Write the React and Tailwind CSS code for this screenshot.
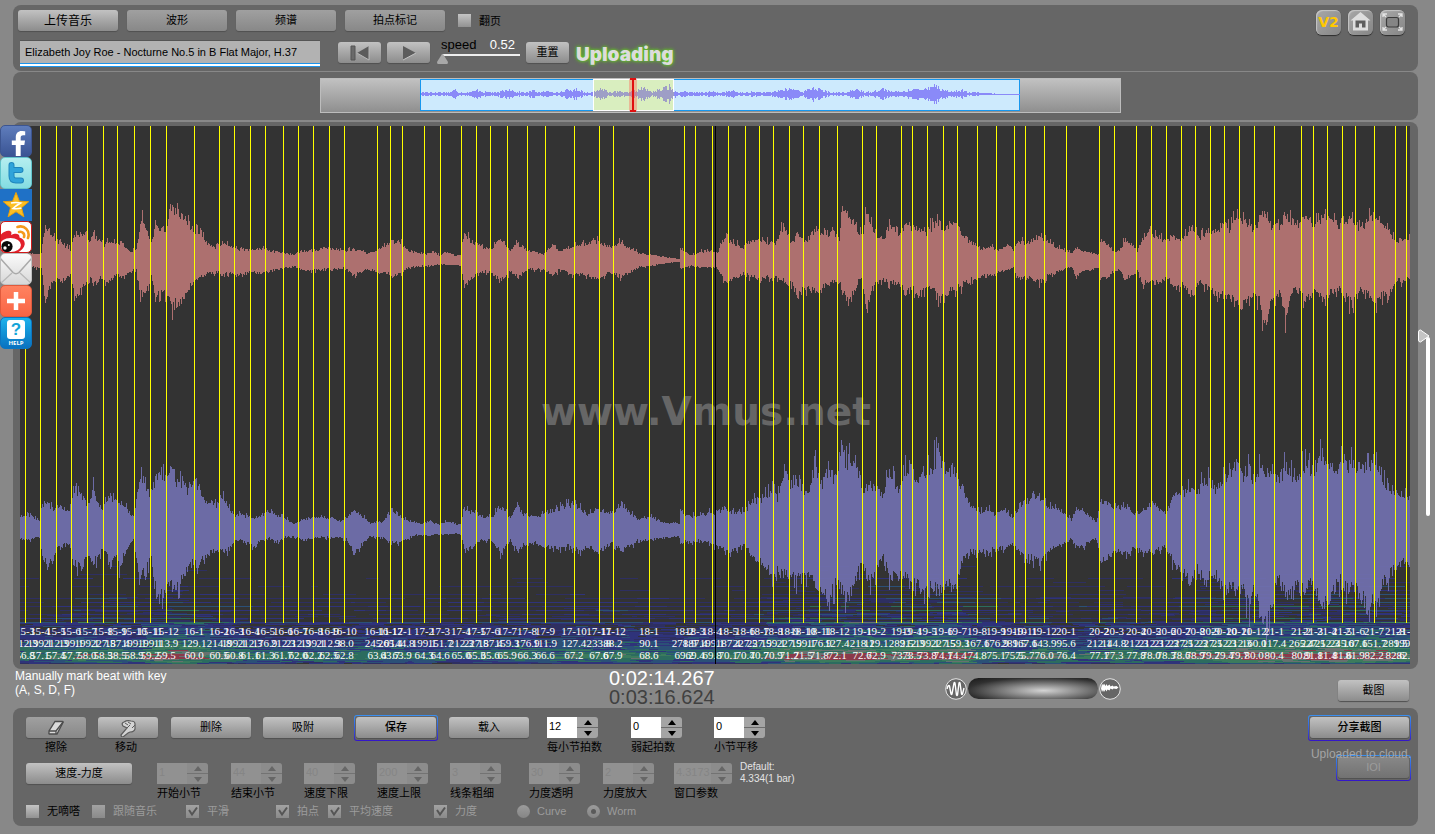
import React from "react";
import { FaFacebookF } from "react-icons/fa";

/* ---------- waveform data: [x, height above axis, depth below axis] ---------- */

const RED = [
  [20,7,8],[41,7,8],[45,40,45],[50,28,28],[56,20,20],[60,20,24],[70,11,16],[74,28,40],[84,29,28],[90,20,20],[93,28,25],[103,15,18],[107,22,25],[115,18,16],[121,18,18],[130,9,12],[136,11,10],[140,38,35],[143,42,38],[148,26,30],[151,18,15],[155,35,38],[164,35,33],[167,32,35],[170,60,49],[178,50,46],[185,48,38],[190,37,28],[194,32,22],[200,32,19],[207,17,14],[215,13,14],[221,18,14],[230,14,14],[240,11,16],[250,11,12],[260,12,14],[270,10,12],[280,8,9],[295,6,7],[300,9,10],[318,11,11],[325,13,9],[335,12,10],[345,9,8],[352,12,17],[360,10,13],[368,7,10],[378,11,14],[386,16,13],[392,20,18],[400,18,14],[408,10,8],[425,6,6],[432,9,6],[440,5,5],[447,9,5],[455,5,5],[460,5,6],[462,18,15],[464,31,30],[470,20,20],[480,15,13],[490,10,12],[499,22,22],[503,20,20],[510,10,12],[517,18,18],[528,10,10],[543,6,10],[552,16,16],[560,10,10],[572,14,16],[580,16,15],[598,20,20],[610,13,13],[620,18,18],[630,12,13],[640,7,7],[650,6,7],[660,4,4],[679,1,2],[680,13,9],[690,5,6],[700,9,8],[714,10,8],
  [717,8,8],[724,24,22],[731,20,22],[743,13,14],[749,20,18],[761,20,20],[775,18,18],[783,36,22],[786,32,24],[791,17,25],[797,28,38],[807,20,30],[816,35,35],[825,25,28],[832,33,22],[839,22,22],[842,58,35],[848,46,47],[857,32,25],[862,24,20],[866,50,55],[871,38,34],[876,28,25],[883,22,22],[889,38,25],[899,27,25],[906,40,38],[912,35,28],[919,32,38],[926,30,30],[931,35,30],[939,40,40],[945,30,40],[949,38,32],[958,36,30],[963,25,26],[970,20,22],[979,12,18],[990,14,15],[1000,10,12],[1007,16,12],[1013,10,8],[1017,20,20],[1027,18,18],[1039,26,24],[1048,19,17],[1057,13,13],[1066,9,8],[1072,8,8],[1075,14,17],[1082,10,12],[1091,8,10],[1099,6,8],[1100,22,22],[1105,20,20],[1114,8,12],[1119,10,10],[1124,20,20],[1131,18,16],[1137,10,12],[1142,22,24],[1149,30,25],[1158,25,24],[1165,20,18],[1174,24,28],[1183,22,27],[1192,38,38],[1199,24,24],[1209,32,30],[1215,27,36],[1225,42,40],[1229,33,40],[1237,50,45],[1243,42,50],[1250,36,40],[1254,32,40],[1259,45,45],[1265,50,72],[1271,36,45],[1275,36,45],[1280,35,32],[1285,50,65],[1291,44,35],[1298,38,33],[1304,46,43],[1312,38,38],[1316,40,32],[1325,50,45],[1330,42,32],[1339,38,30],[1344,42,36],[1352,46,50],[1358,36,32],[1367,40,35],[1375,50,45],[1381,38,38],[1388,36,38],[1395,20,22],[1404,24,22],[1410,25,20],
];

const BLUE = [
  [20,14,11],[28,16,11],[39,10,9],[42,25,28],[47,30,40],[53,20,33],[57,25,18],[69,20,17],[73,36,38],[78,42,38],[82,36,40],[87,22,25],[93,43,35],[97,27,32],[103,23,20],[109,36,33],[115,30,30],[119,28,40],[125,25,25],[133,13,10],[136,30,30],[139,52,52],[143,58,43],[148,40,38],[150,33,18],[155,55,60],[160,55,75],[164,52,65],[171,65,60],[177,50,62],[184,48,50],[189,38,40],[194,52,35],[197,48,45],[202,32,32],[211,28,25],[217,25,23],[221,36,25],[230,20,20],[234,15,14],[241,15,12],[253,12,18],[257,12,14],[269,20,10],[275,15,14],[285,11,9],[294,6,9],[303,10,12],[321,13,8],[331,12,10],[340,8,9],[347,14,12],[354,20,25],[363,13,15],[370,6,8],[379,8,10],[383,8,8],[388,17,14],[397,17,15],[404,10,12],[413,7,7],[425,6,6],[429,9,7],[438,5,5],[448,8,6],[455,5,5],[461,6,6],[464,22,24],[473,17,20],[480,14,12],[491,12,12],[500,24,25],[510,12,12],[517,25,25],[523,16,17],[535,12,15],[546,18,20],[556,22,20],[569,26,18],[579,24,24],[588,14,18],[597,24,26],[606,17,18],[613,18,15],[621,28,23],[629,18,18],[638,10,12],[650,13,12],[661,7,10],[679,6,8],[680,20,14],[689,12,14],[698,16,12],[712,17,16],
  [717,18,20],[724,22,22],[733,18,24],[745,18,16],[751,30,30],[761,32,36],[772,42,48],[777,34,45],[784,66,48],[788,48,52],[798,52,55],[807,36,50],[814,66,58],[822,50,62],[829,68,75],[835,50,60],[841,95,65],[846,70,80],[853,78,60],[860,55,38],[863,40,40],[869,48,56],[876,40,45],[883,38,30],[889,60,50],[899,42,50],[903,58,50],[910,68,60],[917,55,62],[924,55,72],[931,64,62],[938,82,65],[945,62,62],[951,66,62],[958,52,50],[963,42,32],[970,25,25],[979,18,24],[988,20,24],[995,16,20],[1004,20,20],[1013,12,15],[1019,26,26],[1027,30,30],[1034,38,32],[1041,33,38],[1048,22,22],[1055,24,20],[1064,17,16],[1071,10,10],[1075,20,20],[1082,20,18],[1089,14,14],[1096,7,10],[1100,30,35],[1108,28,30],[1114,22,22],[1126,25,26],[1135,16,20],[1144,22,24],[1153,28,25],[1165,16,18],[1174,36,38],[1183,38,46],[1190,45,56],[1197,40,42],[1205,54,50],[1215,42,50],[1225,54,66],[1236,68,66],[1243,58,64],[1248,66,82],[1254,52,66],[1261,72,90],[1266,62,110],[1273,58,75],[1277,54,52],[1287,66,76],[1296,52,60],[1305,70,70],[1312,60,55],[1322,78,85],[1328,70,78],[1335,60,52],[1344,72,60],[1356,65,66],[1363,68,75],[1367,75,85],[1375,65,75],[1381,50,60],[1388,48,52],[1395,38,40],[1404,38,34],[1410,34,34],
];

/* overview: [x, amplitude] */
const MINI = [
  [0,2],[6,3],[12,2],[30,3],[34,6],[38,2],[50,3],[58,6],[62,3],[75,2],[88,7],[94,3],[105,2],[112,5],[118,2],[128,4],[136,2],[145,5],[157,6],[164,2],[174,3],[180,8],[187,3],[200,3],[207,2],[214,4],[222,8],[230,3],[240,6],[247,11],[252,5],[258,2],[263,4],[272,2],[290,3],[300,2],[312,4],[318,2],[335,3],[345,2],[360,5],[372,7],[382,3],[392,9],[400,5],[410,2],[425,2],[436,7],[444,2],[455,5],[462,7],[470,3],[480,3],[492,7],[500,5],[512,13],[520,7],[528,3],[540,5],[548,2],[556,2],[568,1],[580,0],[599,0],
];

const X0 = 20;
const W = 1390;
const H = 538;

function rng(seed) {
  let s = seed;
  return () => {
    s = (s * 1664525 + 1013904223) % 4294967296;
    return s / 4294967296;
  };
}

function sample(env, x, k) {
  for (let i = 1; i < env.length; i++) {
    if (x <= env[i][0]) {
      const a = env[i - 1];
      const b = env[i];
      return a[k] + ((b[k] - a[k]) * (x - a[0])) / (b[0] - a[0]);
    }
  }
  return env[env.length - 1][k];
}

function bars(env, axis, seed) {
  const r = rng(seed);
  let d = "";
  for (let i = 0; i < W; i++) {
    const x = i + X0;
    const n = () => 0.8 + 0.24 * r() + (r() > 0.86 ? 0.2 : 0);
    const up = Math.max(1, sample(env, x, 1) * n());
    const dn = Math.max(1, sample(env, x, 2) * n());
    d += `M${i + 0.5} ${(axis - up).toFixed(1)}V${(axis + dn).toFixed(1)}`;
  }
  return d;
}

function miniBars(from, to) {
  const r = rng(17);
  let d = "";
  for (let i = 0; i < 599; i++) {
    const a = Math.max(0.5, sample(MINI, i, 1) * (0.4 + 0.6 * r()));
    if (i >= from && i < to) d += `M${i + 101.5} ${(16 - a).toFixed(1)}V${(16 + a).toFixed(1)}`;
  }
  return d;
}

const RED_PATH = bars(RED, 134, 5);
const BLUE_PATH = bars(BLUE, 403, 11);

/* ---------- spectrogram ---------- */

const LEVELS = [
  [0.36, "#2e2f74"],
  [0.5, "#2f3596"],
  [0.68, "#2b5888"],
  [0.86, "#2c7a6a"],
  [1.06, "#3f8c68"],
  [1.26, "#74807e"],
  [1.46, "#a03c52"],
];
const FALLOFF = [[440,0],[452,0.06],[470,0.2],[485,0.32],[494,0.44],[498,0.52],[508,0.56],[514,0.72],[520,0.84],[525,1.0],[528,1.22],[532,1.22],[535,0.95],[536,0.7],[538,0.5]];

function spectrogram() {
  const r = rng(29);
  const out = LEVELS.map(() => "");
  for (let y = 440; y < H; y++) {
    const upper = y < 498;
    const row = (y % 4 === 0 ? 0.3 : 0) + r() * 0.2 - 0.16;
    let x = 0;
    while (x < W) {
      const len = 4 + Math.floor(r() * (upper ? 34 : 22));
      const loud = 0.68 + Math.min(0.6, sample(BLUE, x + X0, 1) / 100);
      const v = sample(FALLOFF, y, 1) * loud + (row * (upper ? 1.1 : 0.5) + (r() - 0.5) * 0.36) * (upper ? loud : 1);
      let k = -1;
      LEVELS.forEach((l, i) => {
        if (v >= l[0]) k = i;
      });
      if (k >= 0) out[k] += `M${x} ${y + 0.5}H${Math.min(W, x + len)}`;
      x += len;
    }
  }
  return out;
}
const SPECTRUM = spectrogram();

/* ---------- beats ---------- */

const BEAT_X = [25,40,56,71,87,103,117,134,150,166,194,219,234,250,265,283,298,313,329,344,377,390,402,424,440,461,476,490,507,527,545,574,599,613,649,684,695,712,728,745,759,773,789,803,819,837,862,876,901,912,927,943,957,977,996,1014,1025,1044,1066,1099,1114,1136,1151,1166,1181,1195,1210,1224,1239,1254,1274,1301,1313,1327,1342,1355,1374,1395,1406];
const TEMPO = {
  "15-12": "113.9", "16-1": "129.1", "16-2": "214.8", "16-10": "98.0", "17-9": "111.9", "17-10": "127.4",
  "17-11": "233.8", "17-12": "88.2", "18-1": "90.1", "18-2": "278.9", "18-12": "127.4", "19-1": "218.1",
  "19-2": "129.1", "19-12": "143.9", "20-1": "95.6", "20-2": "212.1", "20-3": "144.8", "20-12": "160.0", "21-1": "117.4",
};
const BEATS = BEAT_X.map((x, i) => {
  const n = i + 2;
  const name = `${15 + Math.floor(n / 12)}-${(n % 12) + 1}`;
  const gap = (BEAT_X[i + 1] || x + 16) - x;
  return {
    x: x - X0,
    name,
    tempo: TEMPO[name] || (3185 / gap).toFixed(1),
    time: (60 + (x - 194) * 0.01885).toFixed(1),
  };
});

/* ---------- controls ---------- */

const BRIGHT = "bg-linear-to-b from-[#c2c2c2] to-[#8c8c8c] text-black";
const DIM = "bg-linear-to-b from-[#a0a0a0] to-[#888888] text-black";
const OFF = "bg-linear-to-b from-[#888888] to-[#727272] text-[#9c9c9c]";

function Button({ className = "", look = BRIGHT, children, ...rest }) {
  return (
    <button
      type="button"
      className={`flex h-[21px] items-center justify-center rounded-[3px] text-[11px] leading-none shadow-[0_1px_1px_#505050] ${look} ${className}`}
      {...rest}
    >
      {children}
    </button>
  );
}

function Ring({ className = "", children }) {
  return (
    <div className={`rounded-[3px] bg-linear-to-b from-[#3a90f0] to-[#3412c8] p-px ${className}`}>
      <div className="rounded-[2px] bg-[#666] p-px pb-0.5">{children}</div>
    </div>
  );
}

function Arrow({ down = false, off = false }) {
  return (
    <svg viewBox="0 0 8 5" className="h-[5px] w-2" aria-hidden="true">
      <path d={down ? "M0 0h8L4 5z" : "M0 5h8L4 0z"} fill={off ? "#666" : "#000"} />
    </svg>
  );
}

function Stepper({ id, label, value, off = false, wide = false, className = "" }) {
  const half = `flex flex-1 items-center justify-center ${off ? "bg-[#8c8c8c]" : "bg-[#a4a4a4]"}`;
  return (
    <div className={`shrink-0 ${className}`}>
      <div className="flex h-[21px]">
        <input
          id={id}
          type="text"
          defaultValue={value}
          disabled={off}
          className={`h-[21px] pb-1 pl-0.5 text-[11px] ${wide ? "w-[37px]" : "w-[30px]"} ${off ? "bg-[#919191] text-[#858585]" : "bg-white text-black"}`}
        />
        <div className={`flex w-[21px] flex-col gap-px overflow-hidden rounded-r-[3px] ${off ? "bg-[#737373]" : "bg-[#6c6c6c]"}`}>
          <button type="button" disabled={off} aria-label={`${label} +`} className={half}>
            <Arrow off={off} />
          </button>
          <button type="button" disabled={off} aria-label={`${label} -`} className={half}>
            <Arrow down off={off} />
          </button>
        </div>
      </div>
      <label htmlFor={id} className="mt-0.5 block text-[11px] leading-[14px] whitespace-nowrap text-black">
        {label}
      </label>
    </div>
  );
}

function Check({ id, label, checked = false, off = false, className = "" }) {
  return (
    <div className={`flex shrink-0 items-center gap-2 ${className}`}>
      <span className="relative flex size-[13px]">
        <input
          id={id}
          type="checkbox"
          defaultChecked={checked}
          disabled={off}
          className={`size-[13px] appearance-none ${off ? "bg-linear-to-b from-[#a2a2a2] to-[#8a8a8a]" : "bg-linear-to-b from-[#c4c4c4] to-[#929292]"}`}
        />
        {checked && (
          <svg viewBox="0 0 13 13" className="pointer-events-none absolute inset-0" aria-hidden="true">
            <path d="M3 5l3 4.5L11 2.5" fill="none" stroke="#555" strokeWidth="2" />
          </svg>
        )}
      </span>
      <label htmlFor={id} className={`text-[11px] leading-4 whitespace-nowrap ${off ? "text-[#9c9c9c]" : "text-black"}`}>
        {label}
      </label>
    </div>
  );
}

function Radio({ id, label, checked = false, className = "" }) {
  return (
    <div className={`flex shrink-0 items-center gap-[7px] ${className}`}>
      <span className="relative flex size-[13px]">
        <input
          id={id}
          type="radio"
          name="plot"
          defaultChecked={checked}
          disabled
          className="size-[13px] appearance-none rounded-full bg-linear-to-b from-[#9c9c9c] to-[#858585]"
        />
        {checked && <span className="pointer-events-none absolute inset-1 rounded-full bg-[#5a5a5a]" />}
      </span>
      <label htmlFor={id} className="text-[11px] leading-4 text-[#9c9c9c]">{label}</label>
    </div>
  );
}

/* ---------- share links ---------- */

function Share({ label, className, children }) {
  return (
    <a href="#share" aria-label={label} className={`flex size-8 shrink-0 overflow-hidden ${className}`}>
      {children}
    </a>
  );
}

function ShareBar() {
  return (
    <nav className="absolute top-[3px] left-0 flex w-8 flex-col">
      <Share label="Facebook" className="items-end justify-end rounded-[5px] border border-[#3c5590] bg-linear-to-b from-[#5f7dbc] to-[#3a5494]">
        <FaFacebookF className="size-[25px] text-white" />
      </Share>
      <Share label="Twitter" className="items-center justify-center rounded-[5px] border border-[#62c5cc] bg-linear-to-b from-[#b4eef0] to-[#84dde2]">
        <svg viewBox="0 0 32 32" className="size-8 shrink-0" aria-hidden="true">
          <path d="M11.500 8v11q0 4.500 4.500 4.500H21M11.500 13h9" fill="none" stroke="#1f86bd" strokeWidth="6" strokeLinecap="round" strokeLinejoin="round" />
          <path d="M11.500 8v11q0 4.500 4.500 4.500H21M11.500 13h9" fill="none" stroke="#2fa3da" strokeWidth="4" strokeLinecap="round" strokeLinejoin="round" />
        </svg>
      </Share>
      <Share label="Qzone" className="bg-[#1f71c6]">
        <svg viewBox="0 0 32 32" className="size-8" aria-hidden="true">
          <path d="M16 3.500l3.400 8.700 9.300.500-7.200 6 2.400 9.100L16 22.700l-7.900 5.100 2.400-9.100-7.200-6 9.300-.500z" fill="#fbbf24" stroke="#e9a00c" strokeWidth="1" />
          <path d="M11 14c4-.8 7-.6 9.500 0-3 1.800-6 4-7.500 5.500 3 .5 6 .2 8.500-.5" fill="none" stroke="#fff" strokeWidth="1.700" />
        </svg>
      </Share>
      <Share label="Weibo" className="items-center justify-center rounded-[5px] border border-[#d01818] bg-white">
        <svg viewBox="0 0 32 32" className="size-8 shrink-0" aria-hidden="true">
          <path d="M0 15c3-5 8-6 10-5 2 .800 1.500 2.500 1 4 4-2 9-2 8.500 2.500 4 1.200 5.500 4 5.200 7-.7 4-4.700 7.500-8.700 8.500H0z" fill="#e2202c" />
          <ellipse cx="10.500" cy="24" rx="10.500" ry="7" fill="#fff" />
          <circle cx="7" cy="25.500" r="5.600" fill="#0a0a0a" />
          <circle cx="5" cy="27" r="1.700" fill="#fff" />
          <circle cx="8.800" cy="24" r="1" fill="#fff" />
          <path d="M17.500 6c7-2.500 13 4 10.500 11M19 11c3.500-1 6 2 5 5" fill="none" stroke="#f49a1c" strokeWidth="2.600" strokeLinecap="round" />
        </svg>
      </Share>
      <Share label="Email" className="items-center justify-center rounded-[5px] border border-[#c0c0c0] bg-linear-to-b from-[#fafafa] to-[#d8d8d8]">
        <svg viewBox="0 0 32 32" className="size-8 shrink-0" aria-hidden="true">
          <path d="M0 31l12-11M32 31L20 20" fill="none" stroke="#b8b8b8" strokeWidth="1.300" />
          <path d="M0 5l13 14.500q3 2.500 6 0L32 5" fill="none" stroke="#aaa" strokeWidth="1.600" />
        </svg>
      </Share>
      <Share label="More" className="items-center justify-center rounded-[5px] border border-[#e05a3c] bg-linear-to-b from-[#ff8260] to-[#f96444]">
        <svg viewBox="0 0 32 32" className="size-8 shrink-0" aria-hidden="true">
          <path d="M16 7v18M7 16h18" stroke="#fff" strokeWidth="4.500" />
        </svg>
      </Share>
      <Share label="Help" className="items-center justify-center rounded-[5px] border border-[#0c76c0] bg-linear-to-b from-[#1db2ec] to-[#0a72c0]">
        <span className="flex flex-col items-center">
          <span className="flex h-[19px] w-[18px] items-center justify-center rounded-[3px] bg-white text-[17px] leading-none font-bold text-[#14a4d8]">?</span>
          <span className="font-['Open_Sans',sans-serif] text-[6px] leading-[8px] font-bold text-white">HELP</span>
        </span>
      </Share>
    </nav>
  );
}

/* ---------- panels ---------- */

const TILE = "flex size-[25px] items-center justify-center rounded-[6px] bg-linear-to-br from-[#a8a8a8] to-[#868686] shadow-[0_1px_1px_#2c2c2c,inset_1px_1px_1px_#c6c6c6]";

function TopPanel() {
  return (
    <header className="mr-[17px] ml-[13px] flex h-[66px] justify-between rounded-lg bg-[#666]">
      <div className="pt-[5px] pl-[5px]">
        <div className="flex items-center gap-[9px]">
          <Button className="w-[100px]">
            <span className="text-[12px]">上传音乐</span>
          </Button>
          <Button look={DIM} className="w-[100px]">波形</Button>
          <Button look={DIM} className="w-[100px]">频谱</Button>
          <Button look={DIM} className="w-[100px]">拍点标记</Button>
          <Check id="flip" label="翻页" className="ml-1" />
        </div>
        <div className="mt-[9px] flex items-start pl-0.5">
          <input
            type="text"
            aria-label="Title"
            defaultValue="Elizabeth Joy Roe - Nocturne No.5 in B Flat Major, H.37"
            className="h-[27px] w-[300px] border-t border-t-[#555] bg-[#b2b2b2] pb-1 pl-[5px] text-[11px] text-black shadow-[inset_0_-1px_0_#1c94ec,inset_0_-3px_0_#fff,inset_0_-4px_0_#1c94ec]"
          />
          <Button className="mt-0.5 ml-[18px] w-[43px]" aria-label="Back to start">
            <svg viewBox="0 0 22 16" className="h-4 w-[22px]" aria-hidden="true">
              <path d="M2 1h4v14H2z" fill="#6a6a6a" stroke="#555" strokeWidth="1" />
              <path d="M20 1L8 8l12 7z" fill="#5c5c5c" />
              <path d="M20 1v14L8 8" fill="none" stroke="#b8b8b8" strokeWidth="1" />
            </svg>
          </Button>
          <Button className="mt-0.5 ml-1.5 w-[43px]" aria-label="Play">
            <svg viewBox="0 0 16 16" className="size-4" aria-hidden="true">
              <path d="M2 1l13 7-13 7z" fill="#5c5c5c" />
              <path d="M2 15l13-7" fill="none" stroke="#c4c4c4" strokeWidth="1" />
            </svg>
          </Button>
          <div className="relative ml-[7px] h-[27px] w-[84px] text-[13px] leading-4">
            <div className="-mt-[3px] flex justify-between pr-1.5 pl-1">
              <label htmlFor="speed" className="text-black">speed</label>
              <output className="text-white">0.52</output>
            </div>
            <svg viewBox="0 0 84 12" className="absolute top-[13px] left-0 h-3 w-[84px]" aria-hidden="true">
              <path d="M6 2h77" stroke="#eee" strokeWidth="2" />
              <path d="M5 1h1l5 8q0 2-1 2H1q-1 0-1-2z" fill="#a8a8a8" />
            </svg>
            <input id="speed" type="range" min="0" max="2" step="0.01" defaultValue="0.52" className="absolute inset-x-0 bottom-0 h-3 w-full opacity-0" />
          </div>
          <Button className="mt-0.5 ml-[5px] w-[43px]">重置</Button>
          <p className="mt-[5px] ml-[7px] font-[Inter,sans-serif] text-[19px] leading-5 font-black text-[#dcdcdc] [text-shadow:0_0_3px_#66d020,0_0_4px_#5cc41c]">Uploading</p>
        </div>
      </div>
      <nav className="flex gap-[7px] pt-[5px] pr-[13px]">
        <a href="#v2" className={`${TILE} font-['DejaVu_Sans',sans-serif] text-[14px] font-bold text-[#ffc800]`}>V2</a>
        <a href="#home" aria-label="Home" className={TILE}>
          <svg viewBox="0 0 25 25" className="size-[25px]" aria-hidden="true">
            <path d="M12.500 2L2.500 10.500h2.500V20.500h15v-10h2.500z" fill="#dedede" />
            <path d="M7.500 17.500v-7h10v7h-3.500v-4h-3v4z" fill="#5e5e5e" />
          </svg>
        </a>
        <a href="#full" aria-label="Full screen" className={TILE}>
          <svg viewBox="0 0 25 25" className="size-[25px]" aria-hidden="true">
            <rect x="6.500" y="7.500" width="12" height="9.500" rx="2" fill="#858585" stroke="#3c3c3c" strokeWidth="1.200" />
            <path d="M3 7V4h4M3 4l3 3M22 7V4h-4M22 4l-3 3M3 17v3h4M3 20l3-3M22 17v3h-4M22 20l-3-3" fill="none" stroke="#e4e4e4" strokeWidth="1.300" />
          </svg>
        </a>
      </nav>
    </header>
  );
}

function Overview() {
  return (
    <section className="mt-px mr-[17px] ml-[13px] flex h-12 justify-center rounded-lg bg-[#666] pt-1.5 pl-[10px]">
      <svg viewBox="0 0 801 35" className="h-[35px] w-[801px]" shapeRendering="crispEdges" aria-label="Overview">
        <defs>
          <linearGradient id="track" x1="0" y1="0" x2="0" y2="1">
            <stop offset="0" stopColor="#c2c2c2" />
            <stop offset="1" stopColor="#8e8e8e" />
          </linearGradient>
        </defs>
        <rect x=".5" y=".5" width="800" height="34" fill="url(#track)" stroke="#bdbdbd" />
        <rect x="100.500" y="1.500" width="599" height="31" fill="#cdeafd" stroke="#1797ee" />
        <path d={miniBars(0, 599)} stroke="#8a8af8" />
        <rect x="273.500" y="1.500" width="80" height="31" fill="#d9eebf" stroke="#fff" />
        <path d={miniBars(173, 253)} stroke="#9e9ec6" />
        <rect x="309" y="1" width="8" height="32" fill="#ff6a5a" opacity=".4" />
        <path d="M313 1v33M310 1h6M310 33h6" stroke="#e01010" strokeWidth="2" />
      </svg>
    </section>
  );
}

function WavePanel() {
  return (
    <section className="relative mt-0.5 flex">
      <div className="ml-[13px] flex-1 rounded-lg bg-[#666] px-[7px] pt-1 pr-2 pb-[5px]">
        <div className="relative h-[538px] overflow-hidden bg-[#333]">
          <svg viewBox={`0 0 ${W} ${H}`} preserveAspectRatio="none" className="absolute inset-0 size-full" shapeRendering="crispEdges" aria-hidden="true">
            <path d={RED_PATH} stroke="#ad706f" />
            <g opacity=".9">
              {SPECTRUM.map((d, i) => (
                <path key={i} d={d} stroke={LEVELS[i][1]} opacity={i < 2 ? 0.8 : 0.9} />
              ))}
            </g>
            <path d={BLUE_PATH} stroke="#7170ae" opacity=".93" />
          </svg>
          <p className="absolute inset-x-0 top-[262px] pr-[18px] text-center font-['DejaVu_Sans',sans-serif] text-[39px] leading-[48px] font-bold text-[#666]">www.Vmus.net</p>
          <svg className="absolute inset-0 size-full font-['Liberation_Serif',serif] text-[11px]" fill="#fff" textAnchor="middle" aria-label="Beats">
            {BEATS.map((b) => {
              const x = `${(b.x / W) * 100}%`;
              return (
                <g key={b.name}>
                  <rect x={x} y="0" width="1" height="497" fill="#ffff00" shapeRendering="crispEdges" />
                  <text x={x} y="509">{b.name}</text>
                  <text x={x} y="521">{b.tempo}</text>
                  <text x={x} y="533">{b.time}</text>
                </g>
              );
            })}
            <rect x="50%" y="0" width="1" height="538" fill="#000" />
          </svg>
        </div>
      </div>
      <div className="relative w-[17px] shrink-0">
        <svg viewBox="0 0 12 188" className="absolute top-[207px] left-0 h-[188px] w-3" aria-hidden="true">
          <path d="M10 10v175" stroke="#fff" strokeWidth="4" strokeLinecap="round" />
          <path d="M.500 3q0-2 2-2L11 7 2.500 13q-2 0-2-2z" fill="#c4c4c4" stroke="#fff" strokeWidth="1" />
        </svg>
        <input type="range" aria-label="Zoom" defaultValue="100" className="absolute top-[207px] left-0 h-[188px] w-4 opacity-0 [writing-mode:vertical-lr]" />
      </div>
      <ShareBar />
    </section>
  );
}

function StatusBar() {
  return (
    <section className="grid h-[39px] grid-cols-[594fr_336fr_393fr_97fr] pl-[15px]">
      <p className="text-[12px] leading-[14px] text-white">
        Manually mark beat with key
        <br />
        (A, S, D, F)
      </p>
      <div className="text-[20px] leading-[19px]">
        <p className="text-white">0:02:14.267</p>
        <p className="text-[#404040]">0:03:16.624</p>
      </div>
      <div className="flex items-center">
        <svg viewBox="0 0 22 22" className="size-[22px]" aria-hidden="true">
          <circle cx="11" cy="11" r="10.300" fill="#666" stroke="#e4e4e4" strokeWidth="1" />
          <path d="M2 11l1-3q1-1 1.500 0L6 16q.500 1 1 0L9 5q.500-1 1 0l1.500 12q.500 1 1 0L14 5q.500-1 1 0l1.500 11q.500 1 1 0l1.500-6" fill="none" stroke="#fff" strokeWidth="1.400" />
        </svg>
        <div className="relative mx-px h-[21px] w-[130px] rounded-full bg-[radial-gradient(ellipse_at_58%_60%,#d4d4d4,#303030_72%,#181818)]">
          <input type="range" aria-label="Balance" className="absolute inset-0 size-full opacity-0" />
        </div>
        <svg viewBox="0 0 22 22" className="size-[22px]" aria-hidden="true">
          <circle cx="11" cy="11" r="10.300" fill="#666" stroke="#e4e4e4" strokeWidth="1" />
          <path d="M2 10.500l1-5 1 2 1-2 1.500 2.500 1-2 1 2 2-1.500 1 2 2-1 1 1 3-.500 2 1.500-2 1.500-3-.500-1 1-2-1-1 2-2-1-1 2-1-2-1.500 2.500-1-2-1 2z" fill="#fff" />
        </svg>
      </div>
      <div className="pt-[11px]">
        <Button className="w-[71px]">截图</Button>
      </div>
    </section>
  );
}

function ToolPanel() {
  return (
    <footer className="mr-[17px] ml-[13px] flex justify-between rounded-lg bg-[#666] pt-[9px] pr-[7px] pb-[7px] pl-[13px]">
      <div>
        <div className="flex h-[46px] items-start">
          <div className="mr-3 w-[60px]">
            <Button id="erase" look={DIM} className="w-[60px]" aria-label="擦除">
              <svg viewBox="0 0 18 16" className="h-4 w-[18px]" aria-hidden="true">
                <path d="M8 1.500h7.500q1 0 .500 1L10 14H2.500q-1 0-.500-1v-2z" fill="#dadada" stroke="#4c4c4c" strokeWidth="1.300" />
                <path d="M2 11h7l7-9M9 11v3" fill="none" stroke="#4c4c4c" strokeWidth="1.300" />
              </svg>
            </Button>
            <label htmlFor="erase" className="mt-0.5 block text-center text-[11px] leading-[14px] text-black">擦除</label>
          </div>
          <div className="mr-[13px] w-[60px]">
            <Button id="move" className="w-[60px]" aria-label="移动">
              <svg viewBox="0 0 18 18" className="size-[18px]" aria-hidden="true">
                <path d="M2 16L8 9 4 7q-2-3 1-4 3-2 7-1 4 0 4 3v5q-1 3-5 3l-2 1-5 4q-2 0-2-2z" fill="#d4d4d4" stroke="#5c5c5c" strokeWidth="1.200" />
                <path d="M8 9l3-3M6 4l3 2M9 3l3 2M16 6l-3 3" fill="none" stroke="#5c5c5c" strokeWidth="1" />
              </svg>
            </Button>
            <label htmlFor="move" className="mt-0.5 block pr-1 text-center text-[11px] leading-[14px] text-black">移动</label>
          </div>
          <div className="flex">
            <Button className="w-20">删除</Button>
            <Button className="ml-3 w-20">吸附</Button>
            <Ring className="-mt-0.5 mr-[11px] ml-[11px]">
              <Button className="w-20 font-medium">保存</Button>
            </Ring>
            <Button className="w-20">载入</Button>
          </div>
          <Stepper id="beats" label="每小节拍数" value="12" className="ml-[18px] w-[84px]" />
          <Stepper id="pickup" label="弱起拍数" value="0" className="w-[83px]" />
          <Stepper id="shift" label="小节平移" value="0" />
        </div>
        <div className="flex h-10 items-start">
          <Button className="mr-[25px] w-[106px]">速度-力度</Button>
          <Stepper id="from" label="开始小节" value="1" off className="w-[74px]" />
          <Stepper id="to" label="结束小节" value="44" off className="w-[73px]" />
          <Stepper id="min" label="速度下限" value="40" off className="w-[73px]" />
          <Stepper id="max" label="速度上限" value="200" off className="w-[73px]" />
          <Stepper id="line" label="线条粗细" value="3" off className="w-[79px]" />
          <Stepper id="alpha" label="力度透明" value="30" off className="w-[74px]" />
          <Stepper id="gain" label="力度放大" value="2" off className="w-[71px]" />
          <Stepper id="window" label="窗口参数" value="4.3173" off wide className="w-[66px]" />
          <p className="-mt-0.5 text-[10px] leading-3 text-[#e4e4e4]">
            Default:
            <br />
            4.334(1 bar)
          </p>
        </div>
        <div className="flex h-4 items-center">
          <Check id="mute" label="无嘀嗒" className="w-[66px]" />
          <Check id="follow" label="跟随音乐" off className="w-[94px]" />
          <Check id="smooth" label="平滑" checked off className="w-[90px]" />
          <Check id="beat" label="拍点" checked off className="w-[52px]" />
          <Check id="avg" label="平均速度" checked off className="w-[106px]" />
          <Check id="force" label="力度" checked off className="w-[83px]" />
          <Radio id="curve" label="Curve" className="w-[70px]" />
          <Radio id="worm" label="Worm" checked />
        </div>
      </div>
      <div className="-mt-0.5 flex flex-col items-end">
        <Ring>
          <Button className="w-[99px] font-medium">分享截图</Button>
        </Ring>
        <p className="relative z-10 mt-1.5 text-[12px] leading-[14px] text-[#a4a4a4]">Uploaded to cloud.</p>
        <Ring className="-mt-1.5">
          <Button look={OFF} disabled className="w-[71px]">IOI</Button>
        </Ring>
      </div>
    </footer>
  );
}

export default function App() {
  return (
    <main className="min-h-screen bg-[#888] pt-[5px] pb-[7px] font-['Liberation_Sans','Noto_Sans_CJK_SC',sans-serif]">
      <TopPanel />
      <Overview />
      <WavePanel />
      <StatusBar />
      <ToolPanel />
    </main>
  );
}
